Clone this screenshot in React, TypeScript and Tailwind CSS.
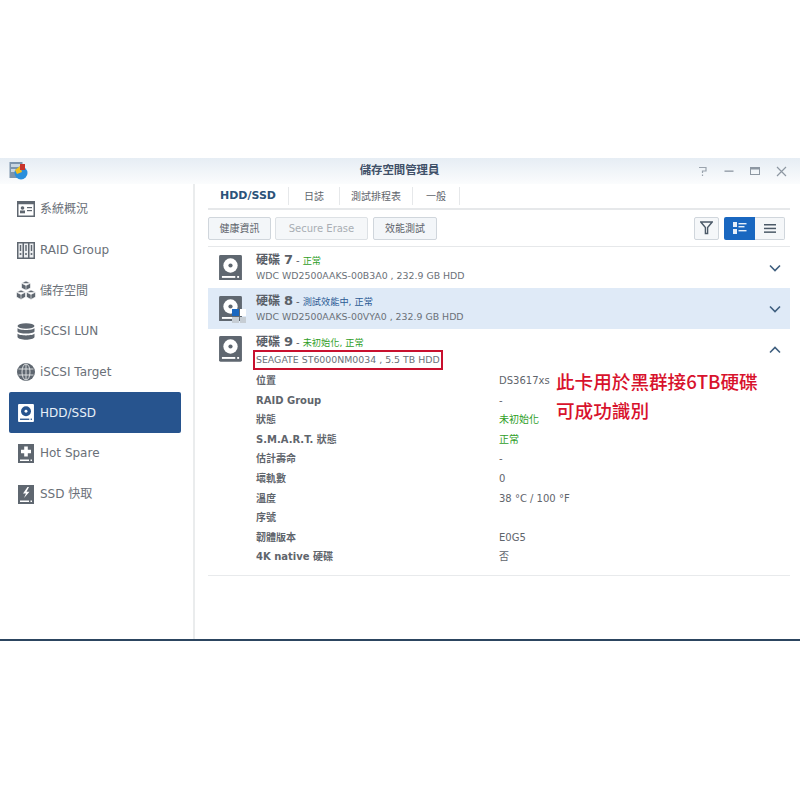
import React from "react";

function Hdd({ size = 24, bg = "#5f6770", fg = "#ffffff" }: { size?: number; bg?: string; fg?: string }) {
  return (
    <svg width={size} height={size * 1.12} viewBox="0 0 24 27" className="block">
      <rect x="0" y="0" width="24" height="27" rx="1.5" fill={bg} />
      <circle cx="12" cy="11" r="7.5" fill={fg} />
      <circle cx="12" cy="11" r="2.2" fill={bg} />
      <rect x="3" y="22" width="14" height="2" fill={fg} />
      <rect x="19" y="22" width="2" height="2" fill={fg} />
    </svg>
  );
}

function Chevron({ up = false }: { up?: boolean }) {
  return (
    <svg width="12" height="8" viewBox="0 0 12 8" className="block">
      <path d={up ? "M1 6.5 L6 1.5 L11 6.5" : "M1 1.5 L6 6.5 L11 1.5"} fill="none" stroke="#3f5f7f" strokeWidth="1.6" />
    </svg>
  );
}

const G = "#5f6770";

const icons: Record<string, React.ReactNode> = {
  overview: (
    <svg width="18" height="16" viewBox="0 0 18 16">
      <rect x="0.75" y="0.75" width="16.5" height="14.5" fill="none" stroke={G} strokeWidth="1.5" />
      <rect x="0.75" y="0.75" width="16.5" height="2.5" fill={G} />
      <circle cx="5.5" cy="7" r="1.8" fill={G} />
      <rect x="3" y="9.5" width="5" height="2.8" fill={G} />
      <rect x="10" y="6" width="5" height="1.2" fill={G} />
      <rect x="10" y="9" width="5" height="1.2" fill={G} />
    </svg>
  ),
  raid: (
    <svg width="18" height="17" viewBox="0 0 18 17">
      <rect x="0" y="0" width="18" height="17" fill={G} />
      <rect x="1.5" y="1.5" width="4" height="14" fill="#eceef0" />
      <rect x="7" y="1.5" width="4" height="14" fill="#eceef0" />
      <rect x="12.5" y="1.5" width="4" height="14" fill="#eceef0" />
      <rect x="2.8" y="3" width="1.4" height="6" fill={G} />
      <rect x="8.3" y="3" width="1.4" height="6" fill={G} />
      <rect x="13.8" y="3" width="1.4" height="6" fill={G} />
      <circle cx="3.5" cy="12" r="1" fill={G} />
      <circle cx="9" cy="12" r="1" fill={G} />
      <circle cx="14.5" cy="12" r="1" fill={G} />
    </svg>
  ),
  storage: (
    <svg width="20" height="19" viewBox="0 0 20 19" fill={G} stroke="#ffffff" strokeWidth="0.6">
      <path d="M10 0 L14.5 2.2 V7 L10 9.2 L5.5 7 V2.2 Z M5.5 2.2 L10 4.4 L14.5 2.2 M10 4.4 V9.2" />
      <path d="M5 9 L9.5 11.2 V16 L5 18.5 L0.5 16 V11.2 Z M0.5 11.2 L5 13.4 L9.5 11.2 M5 13.4 V18.5" />
      <path d="M15 9 L19.5 11.2 V16 L15 18.5 L10.5 16 V11.2 Z M10.5 11.2 L15 13.4 L19.5 11.2 M15 13.4 V18.5" />
    </svg>
  ),
  lun: (
    <svg width="18" height="17" viewBox="0 0 18 17" fill={G}>
      <ellipse cx="9" cy="3" rx="8.5" ry="2.8" />
      <path d="M0.5 5 C2 7.6 16 7.6 17.5 5 V8.5 C16 11.2 2 11.2 0.5 8.5 Z" />
      <path d="M0.5 10.5 C2 13 16 13 17.5 10.5 V14 C16 17.6 2 17.6 0.5 14 Z" />
    </svg>
  ),
  target: (
    <svg width="18" height="18" viewBox="0 0 18 18">
      <circle cx="9" cy="9" r="9" fill={G} />
      <g fill="none" stroke="#e4e6e8" strokeWidth="0.9">
        <ellipse cx="9" cy="9" rx="4" ry="8" />
        <path d="M9 1 V17 M1.5 6 H16.5 M1.5 12 H16.5" />
      </g>
    </svg>
  ),
  hot: (
    <svg width="16" height="19" viewBox="0 0 16 19">
      <rect width="16" height="19" fill={G} />
      <path d="M6.2 2.5 H9.8 V5.7 H13 V9.3 H9.8 V12.5 H6.2 V9.3 H3 V5.7 H6.2 Z" fill="#fff" />
      <rect x="2" y="15.5" width="9" height="1.5" fill="#fff" />
      <rect x="12.5" y="15.5" width="1.5" height="1.5" fill="#fff" />
    </svg>
  ),
  ssd: (
    <svg width="16" height="19" viewBox="0 0 16 19">
      <rect width="16" height="19" fill={G} />
      <path d="M9.5 2 L5 8.5 H8 L6 13 L11.5 6.8 H8.5 L11 2 Z" fill="#fff" />
      <rect x="2" y="15.5" width="9" height="1.5" fill="#fff" />
      <rect x="12.5" y="15.5" width="1.5" height="1.5" fill="#fff" />
    </svg>
  ),
};

const nav = [
  { key: "overview", label: "系統概況" },
  { key: "raid", label: "RAID Group" },
  { key: "storage", label: "儲存空間" },
  { key: "lun", label: "iSCSI LUN" },
  { key: "target", label: "iSCSI Target" },
  { key: "hdd", label: "HDD/SSD", active: true },
  { key: "hot", label: "Hot Spare" },
  { key: "ssd", label: "SSD 快取" },
];

const details: [string, string, boolean?][] = [
  ["位置", "DS3617xs"],
  ["RAID Group", "-"],
  ["狀態", "未初始化", true],
  ["S.M.A.R.T. 狀態", "正常", true],
  ["估計壽命", "-"],
  ["壞軌數", "0"],
  ["溫度", "38 °C / 100 °F"],
  ["序號", ""],
  ["韌體版本", "E0G5"],
  ["4K native 硬碟", "否"],
];

function DiskHead({ n, status, color, lift = false }: { n: string; status: string; color: string; lift?: boolean }) {
  return (
    <div className={lift ? "flex items-baseline h-[18px] text-[#5a6068] -translate-y-[1px]" : "flex items-baseline h-[18px] text-[#5a6068]"}>
      <span className="text-[12px] font-bold">硬碟</span>
      <span className="text-[13px] font-bold ml-[4px]">{n}</span>
      <span className="text-[10px] ml-[3px]">-</span>
      <span className="text-[9.2px] ml-[3px]" style={{ color }}>{status}</span>
    </div>
  );
}

export default function App() {
  return (
    <div className="w-[800px] h-[800px] bg-white relative overflow-hidden font-['DejaVu_Sans','Noto_Sans_CJK_TC',sans-serif] text-[#5f656c]">
      <div className="h-[158px]" />
      <div className="h-[483px] flex flex-col border-b-2 border-[#2c4560]">
        {/* title bar */}
        <div className="h-[26px] shrink-0 flex items-center bg-gradient-to-b from-[#e6edf4] to-[#fbfcfd]">
          <div className="flex-1 basis-0">
            <svg width="20" height="20" viewBox="0 0 20 20" className="ml-[9px] block">
              <rect x="0.5" y="1" width="13" height="16" fill="#7d94ac" />
              <rect x="2" y="3" width="10" height="3" fill="#c9d6e2" />
              <rect x="2" y="8" width="10" height="3" fill="#c9d6e2" />
              <circle cx="12" cy="12" r="6.5" fill="#2a8fdc" />
              <path d="M6 9 L11 5 L13 11 L8 13 Z" fill="#f3bf1f" />
              <rect x="11" y="3" width="5" height="6" fill="#c8342a" />
            </svg>
          </div>
          <div className="ml-[12px] text-[11.4px] font-bold text-[#3f5068]">儲存空間管理員</div>
          <div className="flex-1 basis-0 flex items-center justify-end gap-[16px] pr-[13px]">
            <svg width="10" height="10" viewBox="0 0 10 10" fill="none" stroke="#9aa3ad" strokeWidth="1.2"><path d="M1 1.5 H8 V5 H4.5 V7 M4.5 8.5 V10" /></svg>
            <svg width="10" height="10" viewBox="0 0 10 10"><rect x="0.5" y="4.5" width="9" height="1.3" fill="#8d97a2" /></svg>
            <svg width="10" height="10" viewBox="0 0 10 10" fill="none" stroke="#8d97a2"><rect x="0.5" y="1.5" width="9" height="7" /><rect x="0.5" y="1.5" width="9" height="1.5" fill="#8d97a2" /></svg>
            <svg width="11" height="11" viewBox="0 0 11 11" fill="none" stroke="#8d97a2" strokeWidth="1.2"><path d="M1 1 L10 10 M10 1 L1 10" /></svg>
          </div>
        </div>

        <div className="flex flex-1 min-h-0">
          {/* sidebar */}
          <div className="w-[195px] shrink-0 border-r-2 border-[#eaeced] pl-[9px] pr-[12px] pt-[5px]">
            {nav.map((item) => (
              <div
                key={item.key}
                className={
                  item.active
                    ? "h-[40.7px] rounded-[2px] bg-[#27548e] text-[#e8f0f8] flex items-center text-[12px]"
                    : "h-[40.7px] flex items-center text-[12px] text-[#6a7078]"
                }
              >
                <div className="w-[31px] flex justify-center pl-[2px] shrink-0">
                  {item.key === "hdd" ? <Hdd size={16} bg="#ffffff" fg="#27548e" /> : icons[item.key]}
                </div>
                <span>{item.label}</span>
              </div>
            ))}
          </div>

          {/* main */}
          <div className="flex-1 min-w-0 pl-[13px] pr-[10px]">
            <div className="h-[26px] flex items-center border-b-2 border-[#e6e8ea] text-[10px]">
              <div className="w-[80px] text-center font-bold text-[11px] text-[#2b5279]">HDD/SSD</div>
              <div className="h-[18px] w-px bg-[#e6e8ea]" />
              <div className="w-[50px] text-center">日誌</div>
              <div className="h-[18px] w-px bg-[#e6e8ea]" />
              <div className="w-[72px] text-center">測試排程表</div>
              <div className="h-[18px] w-px bg-[#e6e8ea]" />
              <div className="w-[46px] text-center">一般</div>
              <div className="h-[18px] w-px bg-[#e6e8ea]" />
            </div>

            <div className="h-[37px] flex items-center border-b border-[#e6e8ea] pr-[5px]">
              <div className="h-[23px] w-[63px] flex items-center justify-center rounded-[2px] border border-[#d0d6dc] bg-[#f3f6f9] text-[10px]">健康資訊</div>
              <div className="h-[23px] w-[93px] ml-[4px] flex items-center justify-center rounded-[2px] border border-[#dde1e5] bg-[#f5f7f9] text-[10px] text-[#a9aeb4]">Secure Erase</div>
              <div className="h-[23px] w-[64px] ml-[5px] flex items-center justify-center rounded-[2px] border border-[#d0d6dc] bg-[#f3f6f9] text-[10px]">效能測試</div>
              <div className="flex-1" />
              <div className="h-[23px] w-[25px] flex items-center justify-center rounded-[2px] border border-[#d0d6dc] bg-[#f5f7f9]">
                <svg width="13" height="14" viewBox="0 0 13 14" fill="none" stroke="#4c5a68" strokeWidth="1.4"><path d="M0.8 1 H12.2 L7.6 6.5 V12.5 H5.4 V6.5 Z" /></svg>
              </div>
              <div className="h-[23px] w-[31px] ml-[5px] flex items-center justify-center rounded-l-[2px] bg-[#1967c0]">
                <svg width="14" height="12" viewBox="0 0 14 12" fill="#e6eff9"><rect width="4" height="5" /><rect y="7" width="4" height="5" /><rect x="5.5" y="1" width="8" height="1.4" /><rect x="5.5" y="4" width="6" height="1.4" /><rect x="5.5" y="8" width="8" height="1.4" /></svg>
              </div>
              <div className="h-[23px] w-[30px] flex items-center justify-center rounded-r-[2px] border border-l-0 border-[#d0d6dc] bg-[#f5f7f9]">
                <svg width="12" height="9" viewBox="0 0 12 9" fill="#4c5a68"><rect width="12" height="1.5" /><rect y="3.7" width="12" height="1.5" /><rect y="7.4" width="12" height="1.5" /></svg>
              </div>
            </div>

            {/* disk 7 */}
            <div className="h-[41px] flex items-center pl-[11px] pr-[9px]">
              <Hdd size={23} />
              <div className="ml-[14px] flex-1 -translate-y-[1px]">
                <DiskHead n="7" status="正常" color="#2f9e1f" lift />
                <div className="text-[9.4px] leading-[14px] text-[#6a7078]">WDC WD2500AAKS-00B3A0 , 232.9 GB HDD</div>
              </div>
              <Chevron />
            </div>

            {/* disk 8 */}
            <div className="h-[41px] flex items-center pl-[11px] pr-[9px] bg-[#dfeaf7]">
              <div className="relative">
                <Hdd size={23} />
                <div className="absolute right-[-4px] bottom-[-2px] grid grid-cols-2 grid-rows-2 gap-[1px] w-[14px] h-[14px]">
                  <div className="bg-[#1967c0]" />
                  <div className="bg-white" />
                  <div className="bg-[#c6cdd4]" />
                  <div className="bg-[#c6cdd4]" />
                </div>
              </div>
              <div className="ml-[14px] flex-1 -translate-y-[1px]">
                <DiskHead n="8" status="測試效能中, 正常" color="#2b5a94" lift />
                <div className="text-[9.4px] leading-[14px] text-[#6a7078]">WDC WD2500AAKS-00VYA0 , 232.9 GB HDD</div>
              </div>
              <Chevron />
            </div>

            {/* disk 9 */}
            <div className="h-[41px] flex pt-[3px] pl-[11px] pr-[9px]">
              <div className="pt-[4px]"><Hdd size={23} /></div>
              <div className="ml-[14px] flex-1">
                <DiskHead n="9" status="未初始化, 正常" color="#2f9e1f" />
                <div className="flex items-center ml-[-3px] h-[20px] w-[190px] pl-[1px] border-2 border-[#c8102e] text-[9.4px] text-[#6a7078]">SEAGATE ST6000NM0034 , 5.5 TB HDD</div>
              </div>
              <div className="pt-[14px]"><Chevron up /></div>
            </div>

            <div className="pl-[48px] pt-[1px] border-b border-[#e8eaec] pb-[8.5px]">
              {details.map(([k, v, green]) => (
                <div key={k} className="h-[19.55px] flex items-center text-[10px]">
                  <div className="w-[243px] font-bold">{k}</div>
                  <div className={green ? "text-[#2f9e1f]" : ""}>{v}</div>
                </div>
              ))}
            </div>
          </div>
        </div>
      </div>

      <div className="absolute left-[556px] top-[366px] text-[18.6px] leading-[29px] font-medium text-[#d8122c] font-['Noto_Sans_CJK_TC','Noto_Sans',sans-serif]">
        <div>此卡用於黑群接6TB硬碟</div>
        <div>可成功識別</div>
      </div>
    </div>
  );
}
